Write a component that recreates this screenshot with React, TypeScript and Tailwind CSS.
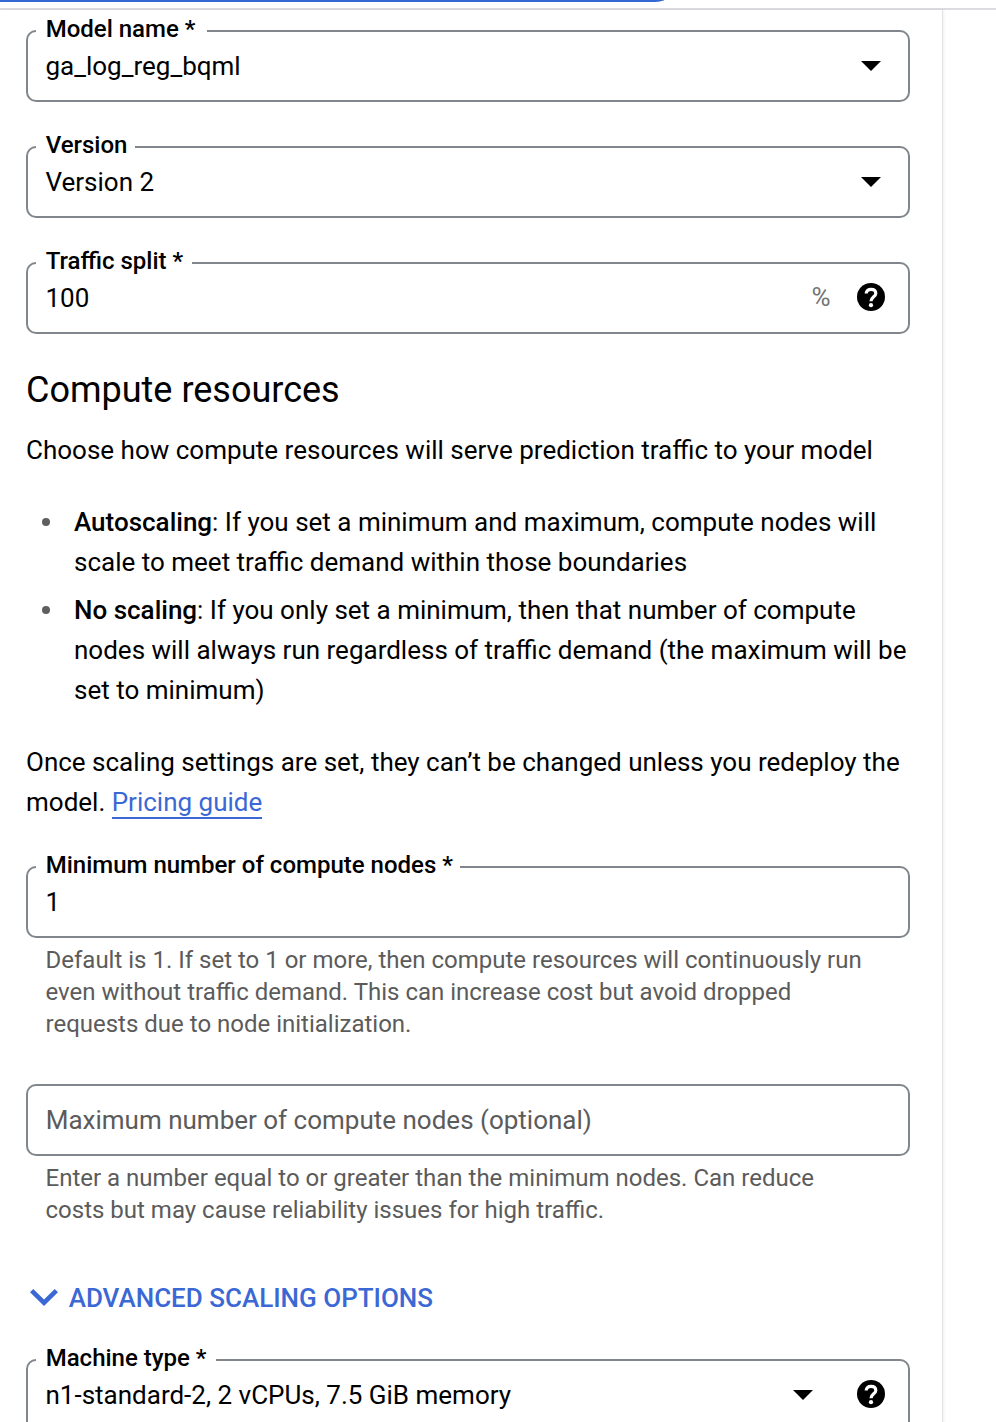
import type { ReactNode } from 'react';

function Caret() {
  return (
    <svg className="h-[10px] w-5" viewBox="0 0 20 10">
      <path d="M0 0h20L10 10z" fill="#000" />
    </svg>
  );
}

function Help() {
  return (
    <svg className="mb-[2px] h-7 w-7" viewBox="0 0 28 28">
      <circle cx="14" cy="14" r="14" fill="#000" />
      <path d="M9.2 10.6C9.2 7.9 11.2 6.4 14 6.4s4.8 1.5 4.8 4c0 3.2-4.8 3.5-4.8 7.8" fill="none" stroke="#fff" strokeWidth="3.2" />
      <circle cx="14" cy="22.2" r="2.1" fill="#fff" />
    </svg>
  );
}

function Field({ label, value, className, legendWidth, children }: {
  label: string;
  value: string;
  className: string;
  legendWidth: string;
  children?: ReactNode;
}) {
  return (
    <fieldset className={`h-[85px] rounded-[10px] border-2 border-[#80868b] pl-2 pr-[23px] ${className}`}>
      <legend className={`whitespace-nowrap pb-1 pl-[9.7px] text-[24px] font-medium leading-6 ${legendWidth}`}>{label}</legend>
      <div className="flex h-[42px] items-center justify-between pl-[9.5px]">
        <span>{value}</span>
        <div className="flex items-center">{children}</div>
      </div>
    </fieldset>
  );
}

export default function App() {
  return (
    <div className="flex h-[1422px] w-[996px] flex-col overflow-hidden bg-white font-['Roboto',sans-serif] text-[26px] leading-10 text-black">
      <header className="h-[10px] shrink-0 border-b-2 border-[#dadce0]">
        <div className="h-[2px] w-[664px] rounded-br-[14px_2px] bg-[#3367d6]" />
      </header>
      <main className="w-[943px] grow border-r border-[#e4e4e4] pl-[26px] pr-8 pt-[7px] shadow-[1px_0_3px_rgba(0,0,0,0.06)]">
        <Field label="Model name *" value="ga_log_reg_bqml" className="" legendWidth="w-[171px]">
          <div className="pr-1"><Caret /></div>
        </Field>
        <Field label="Version" value="Version 2" className="mt-[31px]" legendWidth="w-[99px]">
          <div className="pr-1"><Caret /></div>
        </Field>
        <Field label="Traffic split *" value="100" className="mt-[31px]" legendWidth="w-[156px]">
          <span className="mb-[2px] mr-[26.5px] text-[26px] text-[#757575]">%</span>
          <Help />
        </Field>

        <h2 className="mt-8 text-[36px] leading-[48px]">Compute resources</h2>
        <p className="mt-4 whitespace-nowrap">Choose how compute resources will serve prediction traffic to your model</p>
        <ul className="mt-8 flex flex-col gap-2">
          <li className="flex">
            <span className="ml-4 mr-6 mt-4 h-2 w-2 shrink-0 rounded-full bg-[#5f5f5f]" />
            <span className="whitespace-nowrap">
              <b className="font-medium">Autoscaling</b>: If you set a minimum and maximum, compute nodes will<br />
              scale to meet traffic demand within those boundaries
            </span>
          </li>
          <li className="flex">
            <span className="ml-4 mr-6 mt-4 h-2 w-2 shrink-0 rounded-full bg-[#5f5f5f]" />
            <span className="whitespace-nowrap">
              <b className="font-medium">No scaling</b>: If you only set a minimum, then that number of compute<br />
              nodes will always run regardless of traffic demand (the maximum will be<br />
              set to minimum)
            </span>
          </li>
        </ul>
        <p className="mt-8 whitespace-nowrap">
          Once scaling settings are set, they can’t be changed unless you redeploy the<br />
          model. <a className="border-b-2 border-[#3b68d4] text-[#3b68d4]">Pricing guide</a>
        </p>

        <Field label="Minimum number of compute nodes *" value="1" className="mt-[31px]" legendWidth="w-[424px]" />
        <p className="ml-[19.5px] mt-[6px] whitespace-nowrap text-[24px] leading-8 text-[#5b5b5b]">
          Default is 1. If set to 1 or more, then compute resources will continuously run<br />
          even without traffic demand. This can increase cost but avoid dropped<br />
          requests due to node initialization.
        </p>

        <div className="mt-11 flex h-[72px] items-center rounded-[10px] border-2 border-[#80868b] pl-[17.7px] text-[#5b5b5b]">
          Maximum number of compute nodes (optional)
        </div>
        <p className="ml-[19.5px] mt-[6px] whitespace-nowrap text-[24px] leading-8 text-[#5b5b5b]">
          Enter a number equal to or greater than the minimum nodes. Can reduce<br />
          costs but may cause reliability issues for high traffic.
        </p>

        <button className="mt-[52px] flex h-10 items-center pl-1 font-medium text-[#3b68d4]">
          <svg className="mb-[2px] mr-[10.7px] h-[17px] w-7" viewBox="6 8.59 12 7.41" preserveAspectRatio="none">
            <path fill="currentColor" d="M16.59 8.59L12 13.17 7.41 8.59 6 10l6 6 6-6z" />
          </svg>
          ADVANCED SCALING OPTIONS
        </button>

        <Field label="Machine type *" value="n1-standard-2, 2 vCPUs, 7.5 GiB memory" className="mt-7" legendWidth="w-[180px]">
          <div className="mr-11"><Caret /></div>
          <Help />
        </Field>
      </main>
    </div>
  );
}
